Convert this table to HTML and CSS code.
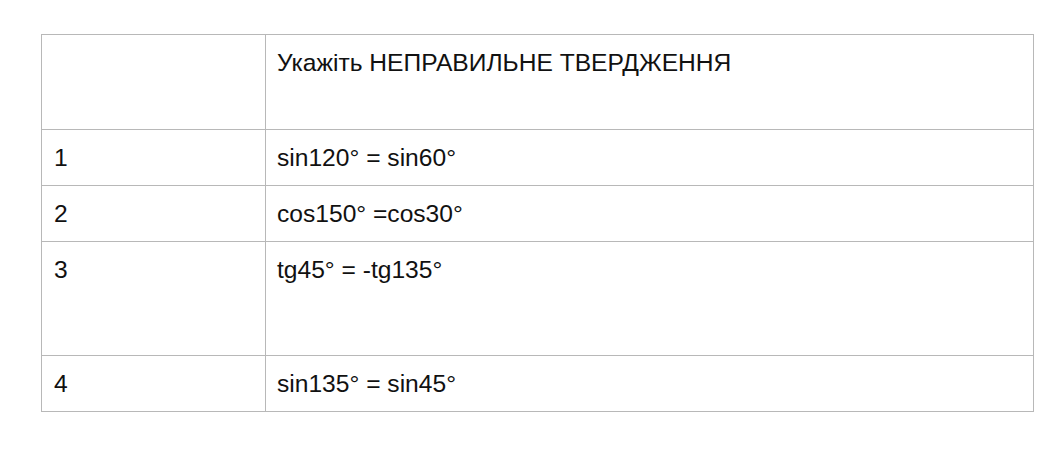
FILE: index.html
```html
<!DOCTYPE html>
<html lang="uk">
<head>
<meta charset="utf-8">
<link rel="stylesheet" href="styles.css">
<title>Тест</title>
</head>
<body>
<table class="quiz">
  <tr class="row-head">
    <td class="num"></td>
    <td class="text">Укажіть НЕПРАВИЛЬНЕ ТВЕРДЖЕННЯ</td>
  </tr>
  <tr class="row">
    <td class="num">1</td>
    <td class="text">sin120° = sin60°</td>
  </tr>
  <tr class="row">
    <td class="num">2</td>
    <td class="text">cos150° =cos30°</td>
  </tr>
  <tr class="row-tall">
    <td class="num">3</td>
    <td class="text">tg45° = -tg135°</td>
  </tr>
  <tr class="row">
    <td class="num">4</td>
    <td class="text">sin135° = sin45°</td>
  </tr>
</table>
</body>
</html>
```
FILE: styles.css
```css
html, body {
  margin: 0;
  padding: 0;
  background: #ffffff;
}

body {
  padding: 34px 0 0 41px;
  font-family: "Liberation Sans", Arial, sans-serif;
  color: #111111;
}

.quiz {
  border-collapse: collapse;
  table-layout: fixed;
  width: 993px;
}

.quiz td {
  border: 1px solid #b8b8b8;
  vertical-align: top;
  font-size: 24.6px;
  line-height: 27px;
  padding: 14px 11px 0 12px;
  box-sizing: border-box;
}

.quiz td.num {
  width: 224px;
}

.quiz td.text {
  padding-left: 11px;
}

.row-head td { height: 95px; }
.row td { height: 56px; }
.row-tall td { height: 114px; }
```
